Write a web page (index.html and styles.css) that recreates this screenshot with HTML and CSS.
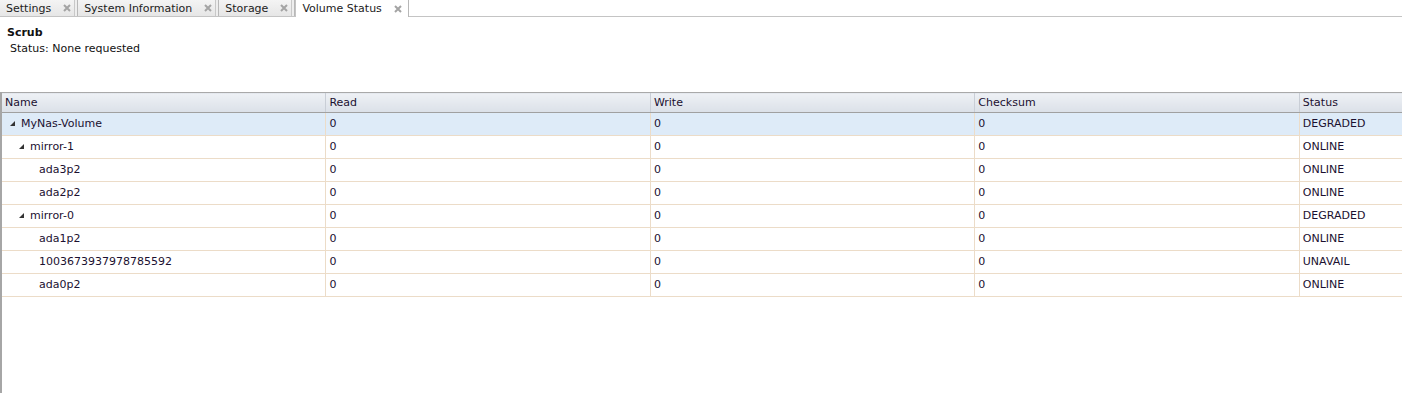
FILE: index.html
```html
<!DOCTYPE html>
<html lang="en">
<head>
<meta charset="UTF-8">
<title>Volume Status</title>
<link rel="stylesheet" href="styles.css">
</head>
<body>
    <div class="tabs">
        <div class="tab">Settings<svg class="close" viewBox="0 0 8 8"><path d="M1 1L7 7M7 1L1 7"/></svg></div>
        <div class="tab">System Information<svg class="close" viewBox="0 0 8 8"><path d="M1 1L7 7M7 1L1 7"/></svg></div>
        <div class="tab">Storage<svg class="close" viewBox="0 0 8 8"><path d="M1 1L7 7M7 1L1 7"/></svg></div>
        <div class="tab active">Volume Status<svg class="close" viewBox="0 0 8 8"><path d="M1 1L7 7M7 1L1 7"/></svg></div>
    </div>
    <div class="scrub">
        <div class="scrub-title">Scrub</div>
        <div class="scrub-status">Status: None requested</div>
    </div>
    <div class="grid">
        <table>
            <thead>
                <tr><th class="c-name">Name</th><th>Read</th><th>Write</th><th>Checksum</th><th class="c-status">Status</th></tr>
            </thead>
            <tbody>
                <tr class="selected"><td class="lvl0"><span class="arrow"></span>MyNas-Volume</td><td>0</td><td>0</td><td>0</td><td>DEGRADED</td></tr>
                <tr><td class="lvl1"><span class="arrow"></span>mirror-1</td><td>0</td><td>0</td><td>0</td><td>ONLINE</td></tr>
                <tr><td class="lvl2">ada3p2</td><td>0</td><td>0</td><td>0</td><td>ONLINE</td></tr>
                <tr><td class="lvl2">ada2p2</td><td>0</td><td>0</td><td>0</td><td>ONLINE</td></tr>
                <tr><td class="lvl1"><span class="arrow"></span>mirror-0</td><td>0</td><td>0</td><td>0</td><td>DEGRADED</td></tr>
                <tr><td class="lvl2">ada1p2</td><td>0</td><td>0</td><td>0</td><td>ONLINE</td></tr>
                <tr><td class="lvl2">1003673937978785592</td><td>0</td><td>0</td><td>0</td><td>UNAVAIL</td></tr>
                <tr><td class="lvl2">ada0p2</td><td>0</td><td>0</td><td>0</td><td>ONLINE</td></tr>
            </tbody>
        </table>
    </div>
</body>
</html>
```

FILE: styles.css
```css
body {
    margin: 0;
    font-family: "DejaVu Sans", Verdana, sans-serif;
    font-size: 11px;
    color: #1b1030;
    background: #fff;
    height: 393px;
    overflow: hidden;
}
.tabs {
    display: flex;
    height: 16px;
    border-bottom: 1px solid #c4c4c4;
    background: #fff;
}
.tab {
    display: flex;
    align-items: center;
    padding: 0 6px 0 6px;
    background: linear-gradient(#f4f4f4, #e6e6e6);
    border-right: 1px solid #b8b8b8;
    box-shadow: inset -2px 0 0 #eee, inset -3px 0 0 #c8c8c8;
    color: #222;
    white-space: nowrap;
}
.tab.active {
    background: #fff;
    height: 17px;
    border-left: 1px solid #c4c4c4;
    box-shadow: none;
}
.close {
    width: 8px;
    height: 8px;
    margin-left: 12px;
    stroke: #a4a4a4;
    stroke-width: 2;
    fill: none;
}
.scrub {
    padding: 9px 0 0 7px;
    height: 66px;
}
.scrub-title {
    font-weight: bold;
    color: #111;
}
.scrub-status {
    margin-top: 3px;
    padding-left: 3px;
    color: #111;
}
.grid {
    border-left: 2px solid #a6a6a6;
    height: 303px;
}
table {
    border-collapse: collapse;
    table-layout: fixed;
    width: 1400px;
}
th {
    height: 19px;
    text-align: left;
    font-weight: normal;
    padding: 0 3px;
    background: linear-gradient(#eef1f5, #dbe0e8);
    border-top: 1px solid #a9a9a9;
    border-bottom: 1px solid #a0a0a0;
    border-left: 1px solid #c9ced6;
    width: 317px;
}
th.c-name {
    width: 317px;
    border-left: none;
}
th.c-status {
    width: 96px;
}
td {
    height: 21px;
    padding: 0 3px 1px;
    border-bottom: 1px solid #ecdcc8;
    border-left: 1px solid #ecdcc8;
    white-space: nowrap;
}
tr.selected td {
    background: #deebf8;
}
td.lvl0 {
    padding-left: 8px;
    border-left: none;
}
td.lvl1 {
    padding-left: 17px;
    border-left: none;
}
td.lvl2 {
    padding-left: 37px;
    border-left: none;
}
.arrow {
    display: inline-block;
    width: 0;
    height: 0;
    border-left: 5px solid transparent;
    border-bottom: 5px solid #333;
    margin-right: 6px;
    vertical-align: 1px;
}
```
